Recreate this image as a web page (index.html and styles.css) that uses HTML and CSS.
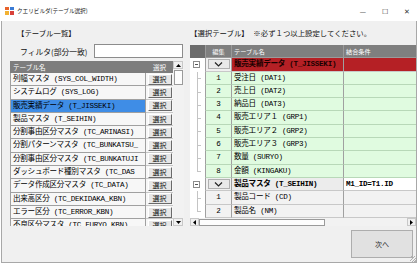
FILE: index.html
```html
<!DOCTYPE html>
<html lang="ja">
<head>
    <meta charset="UTF-8">
    <title>クエリビルダ(テーブル選択)</title>
    <link rel="stylesheet" href="styles.css">
</head>
<body>
    <div class="window">
        <div class="titlebar">
            <svg class="app-icon" width="9" height="8" viewBox="0 0 9 8">
                <rect x="0" y="0" width="4" height="3" fill="#e8632b"/>
                <rect x="5" y="0" width="4" height="3" fill="#3a7bd5"/>
                <rect x="0" y="4" width="4" height="4" fill="#f2b233"/>
                <rect x="5" y="4" width="4" height="4" fill="#d9423a"/>
            </svg>
            <span class="title">クエリビルダ(テーブル選択)</span>
            <div class="controls">
                <span class="ctl">&#x2014;</span>
                <span class="ctl">&#x2610;</span>
                <span class="ctl">&#x2715;</span>
            </div>
        </div>

        <div class="client">
            <div class="panes">
                <!-- テーブル一覧 -->
                <section class="left">
                    <div class="heading">【テーブル一覧】</div>
                    <div class="filter">
                        <label>フィルタ(部分一致)</label>
                        <input type="text" class="filter-input">
                    </div>
                    <div class="list">
                        <div class="list-body">
                            <div class="lrow head">
                                <div class="lname">テーブル名</div>
                                <div class="lsel">選択</div>
                            </div>
                            <div class="lrow"><div class="lname">列幅マスタ (SYS_COL_WIDTH)</div><div class="lsel"><span class="btn">選択</span></div></div>
                            <div class="lrow"><div class="lname">システムログ (SYS_LOG)</div><div class="lsel"><span class="btn">選択</span></div></div>
                            <div class="lrow selected"><div class="lname">販売実績データ (T_JISSEKI)</div><div class="lsel"><span class="btn">選択</span></div></div>
                            <div class="lrow"><div class="lname">製品マスタ (T_SEIHIN)</div><div class="lsel"><span class="btn">選択</span></div></div>
                            <div class="lrow"><div class="lname">分割事由区分マスタ (TC_ARINASI)</div><div class="lsel"><span class="btn">選択</span></div></div>
                            <div class="lrow"><div class="lname">分割パターンマスタ (TC_BUNKATSU_</div><div class="lsel"><span class="btn">選択</span></div></div>
                            <div class="lrow"><div class="lname">分割事由区分マスタ (TC_BUNKATUJI</div><div class="lsel"><span class="btn">選択</span></div></div>
                            <div class="lrow"><div class="lname">ダッシュボード種別マスタ (TC_DAS</div><div class="lsel"><span class="btn">選択</span></div></div>
                            <div class="lrow"><div class="lname">データ作成区分マスタ (TC_DATA)</div><div class="lsel"><span class="btn">選択</span></div></div>
                            <div class="lrow"><div class="lname">出来高区分 (TC_DEKIDAKA_KBN)</div><div class="lsel"><span class="btn">選択</span></div></div>
                            <div class="lrow"><div class="lname">エラー区分 (TC_ERROR_KBN)</div><div class="lsel"><span class="btn">選択</span></div></div>
                            <div class="lrow"><div class="lname">不良区分マスタ (TC_FURYO_KBN)</div><div class="lsel"><span class="btn">選択</span></div></div>
                        </div>
                        <div class="vscroll">
                            <span class="arrow"><svg width="5" height="3" viewBox="0 0 5 3"><path d="M0 3 L2.5 0 L5 3 Z" fill="#000"/></svg></span>
                            <span class="vthumb"></span>
                            <span class="vtrack"></span>
                            <span class="arrow"><svg width="5" height="3" viewBox="0 0 5 3"><path d="M0 0 L5 0 L2.5 3 Z" fill="#000"/></svg></span>
                        </div>
                    </div>
                </section>

                <!-- 選択テーブル -->
                <section class="right">
                    <div class="heading">【選択テーブル】 <span class="note">※必ず１つ以上設定してください。</span></div>
                    <div class="grid">
                        <div class="grow head">
                            <div class="gut"></div>
                            <div class="edit">編集</div>
                            <div class="name">テーブル名</div>
                            <div class="join">結合条件</div>
                        </div>

                        <div class="grow tbl red">
                            <div class="gut"><svg width="7" height="7" viewBox="0 0 7 7"><rect x="0.5" y="0.5" width="6" height="6" fill="#fff" stroke="#8c8c8c"/><path d="M2 3.5 H5" stroke="#555"/></svg></div>
                            <div class="edit"><span class="drop"><svg width="9" height="5" viewBox="0 0 9 5"><path d="M1 0.5 L4.5 4 L8 0.5" fill="none" stroke="#222" stroke-width="1.2"/></svg></span></div>
                            <div class="name">販売実績データ (T_JISSEKI)</div>
                            <div class="join"></div>
                        </div>
                        <div class="grow col green"><div class="gut tree"></div><div class="edit">1</div><div class="name">受注日 (DAT1)</div><div class="join"></div></div>
                        <div class="grow col green"><div class="gut tree"></div><div class="edit">2</div><div class="name">売上日 (DAT2)</div><div class="join"></div></div>
                        <div class="grow col green"><div class="gut tree"></div><div class="edit">3</div><div class="name">納品日 (DAT3)</div><div class="join"></div></div>
                        <div class="grow col green"><div class="gut tree"></div><div class="edit">4</div><div class="name">販売エリア１ (GRP1)</div><div class="join"></div></div>
                        <div class="grow col green"><div class="gut tree"></div><div class="edit">5</div><div class="name">販売エリア２ (GRP2)</div><div class="join"></div></div>
                        <div class="grow col green"><div class="gut tree"></div><div class="edit">6</div><div class="name">販売エリア３ (GRP3)</div><div class="join"></div></div>
                        <div class="grow col green"><div class="gut tree"></div><div class="edit">7</div><div class="name">数量 (SURYO)</div><div class="join"></div></div>
                        <div class="grow col green last"><div class="gut tree"></div><div class="edit">8</div><div class="name">金額 (KINGAKU)</div><div class="join"></div></div>

                        <div class="grow tbl gray">
                            <div class="gut"><svg width="7" height="7" viewBox="0 0 7 7"><rect x="0.5" y="0.5" width="6" height="6" fill="#fff" stroke="#8c8c8c"/><path d="M2 3.5 H5" stroke="#555"/></svg></div>
                            <div class="edit"><span class="drop"><svg width="9" height="5" viewBox="0 0 9 5"><path d="M1 0.5 L4.5 4 L8 0.5" fill="none" stroke="#222" stroke-width="1.2"/></svg></span></div>
                            <div class="name">製品マスタ (T_SEIHIN)</div>
                            <div class="join">M1_ID=T1.ID</div>
                        </div>
                        <div class="grow col plain"><div class="gut tree"></div><div class="edit">1</div><div class="name">製品コード (CD)</div><div class="join"></div></div>
                        <div class="grow col plain last"><div class="gut tree"></div><div class="edit">2</div><div class="name">製品名 (NM)</div><div class="join"></div></div>
                    </div>
                    <div class="hscroll">
                        <span class="arrow"><svg width="3" height="5" viewBox="0 0 3 5"><path d="M3 0 L0 2.5 L3 5 Z" fill="#000"/></svg></span>
                        <span class="hthumb"></span>
                        <span class="htrack"></span>
                        <span class="arrow"><svg width="3" height="5" viewBox="0 0 3 5"><path d="M0 0 L3 2.5 L0 5 Z" fill="#000"/></svg></span>
                    </div>
                </section>
            </div>

            <div class="footer">
                <button class="next">次へ</button>
            </div>
            <span class="grip"></span>
        </div>
    </div>
</body>
</html>
```

FILE: styles.css
```css
body {
    margin: 0;
    font-family: "Noto Sans CJK JP", "Liberation Sans", sans-serif;
    background: #f0f0f0;
}
.window {
    width: 420px;
    height: 267px;
    display: flex;
    flex-direction: column;
    background: #fff;
}

/* タイトルバー */
.titlebar {
    height: 21px;
    display: flex;
    align-items: center;
    padding-left: 5px;
    background: #fff;
}
.app-icon {
    margin-right: 3px;
}
.title {
    font-size: 5.6px;
    color: #222;
}
.controls {
    margin-left: auto;
    display: flex;
    gap: 16px;
    padding-right: 10px;
    font-size: 7px;
    color: #333;
}

/* クライアント領域 */
.client {
    flex: 1;
    position: relative;
    display: flex;
    flex-direction: column;
    background: #f0f0f0;
    margin: 0 3px 4px 1px;
    border-left: 1px solid #a8a8a8;
    border-right: 1px solid #a8a8a8;
    border-bottom: 1px solid #a8a8a8;
}
.panes {
    display: flex;
    gap: 6px;
    padding: 6px 0 0 8px;
}
.heading {
    font-size: 7.4px;
    color: #111;
    height: 12px;
    line-height: 12px;
    padding-left: 7px;
}
.note {
    margin-left: 3px;
}

/* 左：テーブル一覧 */
.left {
    width: 174px;
    display: flex;
    flex-direction: column;
}
.filter {
    display: flex;
    align-items: center;
    height: 16px;
    margin-top: 4px;
    padding-left: 10px;
    font-size: 7.8px;
    color: #111;
}
.filter label {
    width: 74px;
}
.filter-input {
    width: 89px;
    height: 14px;
    box-sizing: border-box;
    border: 1px solid #8c8c8c;
    background: #fff;
    padding: 0;
    margin: 0;
}
.list {
    display: flex;
    height: 165px;
    margin-top: 2px;
}
.list-body {
    width: 163px;
    overflow: hidden;
    background: #fff;
}
.lrow {
    display: flex;
    height: 13.3px;
    font-family: "Liberation Mono", "Noto Sans CJK JP", monospace;
    font-size: 7.6px;
    letter-spacing: -0.3px;
    line-height: 13px;
}
.lrow.head {
    height: 12px;
    line-height: 12px;
}
.lname {
    width: 136px;
    box-sizing: border-box;
    padding-left: 2px;
    white-space: nowrap;
    overflow: hidden;
    background: #f7f7f7;
    border: 1px solid #a0a0a0;
    border-top: none;
    color: #000;
}
.lsel {
    flex: 1;
    display: flex;
    align-items: center;
    justify-content: center;
    border-bottom: 1px solid #c8c8c8;
    background: #f7f7f7;
}
.lrow.head .lname,
.lrow.head .lsel {
    background: #7d7d7d;
    color: #fff;
    border-color: #7d7d7d;
    font-family: "Noto Sans CJK JP", sans-serif;
    font-size: 6.6px;
    letter-spacing: 0;
}
.lrow.selected .lname {
    background: #3f8de6;
}
.btn {
    width: 24px;
    height: 11px;
    box-sizing: border-box;
    display: flex;
    align-items: center;
    justify-content: center;
    background: #e6e6e6;
    border: 1px solid;
    border-color: #fff #6a6a6a #6a6a6a #fff;
    font-family: "Noto Sans CJK JP", sans-serif;
    font-size: 7px;
    letter-spacing: 0;
    line-height: 1;
    color: #111;
}

.vscroll {
    width: 11px;
    display: flex;
    flex-direction: column;
    background: #f2f2f2;
}
.arrow {
    display: flex;
    align-items: center;
    justify-content: center;
    width: 10px;
    height: 8px;
    background: #f0f0f0;
    border: 1px solid #c8c8c8;
    box-sizing: border-box;
}
.vthumb {
    height: 15px;
    margin: 1px 0 0 1px;
    width: 9px;
    background: #fdfdfd;
    border: 1px solid #9a9a9a;
    box-sizing: border-box;
}
.vtrack {
    flex: 1;
}

/* 右：選択テーブル */
.right {
    width: 226px;
    display: flex;
    flex-direction: column;
}
.right .heading {
    padding-left: 0;
}
.grid {
    margin-top: 6px;
    height: 173px;
    overflow: hidden;
    background: #fff;
}
.grow {
    display: flex;
    height: 13.3px;
    font-family: "Liberation Mono", "Noto Sans CJK JP", monospace;
    font-size: 7.6px;
    letter-spacing: -0.3px;
    line-height: 13px;
    color: #000;
}
.grow > div {
    box-sizing: border-box;
    white-space: nowrap;
    overflow: hidden;
}
.gut {
    width: 15px;
    flex: none;
    display: flex;
    align-items: center;
    padding-left: 3px;
    background: #fff;
}
.edit {
    width: 26px;
    flex: none;
    text-align: center;
    border-left: 1px solid #a0a0a0;
    border-bottom: 1px solid #c8c8c8;
}
.name {
    width: 112px;
    flex: none;
    padding-left: 2px;
    border-left: 1px solid #a0a0a0;
    border-bottom: 1px solid #c8c8c8;
}
.join {
    width: 80px;
    flex: none;
    padding-left: 2px;
    border-left: 1px solid #a0a0a0;
    border-bottom: 1px solid #c8c8c8;
}
.grow.head {
    background: #7f7f7f;
    color: #fff;
    font-family: "Noto Sans CJK JP", sans-serif;
    font-size: 6.2px;
    letter-spacing: 0;
}
.grow.head .gut {
    background: #6c6c6c;
}
.grow.head > div {
    border-color: #9a9a9a;
}
.grow.tbl .name,
.grow.tbl .join {
    font-weight: bold;
}
.grow.red .name,
.grow.red .join {
    background: #b52025;
    color: #1a0000;
}
.grow.gray .name {
    background: #ececec;
}
.grow.gray .join {
    background: #fff;
}
.grow.tbl .edit {
    display: flex;
    align-items: center;
    justify-content: center;
    background: #f0f0f0;
}
.drop {
    width: 22px;
    height: 10px;
    display: flex;
    align-items: center;
    justify-content: center;
    background: #e9e9e9;
    border: 1px solid #b0b0b0;
    box-sizing: border-box;
}
.grow.green .edit,
.grow.green .name,
.grow.green .join {
    background: #e0fbe0;
    border-bottom-color: #b8d8b8;
}
.grow.plain .edit,
.grow.plain .name,
.grow.plain .join {
    background: #f2f2f2;
}
.gut.tree {
    position: relative;
}
.gut.tree::before {
    content: "";
    position: absolute;
    left: 7px;
    top: 0;
    bottom: 0;
    border-left: 1px solid #c4c4c4;
}
.grow.last .gut.tree::before {
    bottom: 50%;
}
.gut.tree::after {
    content: "";
    position: absolute;
    left: 7px;
    top: 50%;
    width: 4px;
    border-top: 1px solid #c4c4c4;
}

.hscroll {
    display: flex;
    height: 8px;
    background: #f2f2f2;
}
.hscroll .arrow {
    width: 9px;
    height: 8px;
}
.hthumb {
    width: 126px;
    margin-top: 1px;
    height: 7px;
    background: #fdfdfd;
    border: 1px solid #9a9a9a;
    box-sizing: border-box;
}
.htrack {
    flex: 1;
}

/* フッター */
.footer {
    display: flex;
    justify-content: flex-end;
    padding: 4px 3px 0 0;
}
.next {
    width: 62px;
    height: 28px;
    background: #e1e1e1;
    border: 1px solid #adadad;
    font-family: "Noto Sans CJK JP", sans-serif;
    font-size: 7px;
    color: #222;
}
.grip {
    position: absolute;
    right: 0;
    bottom: 0;
    width: 6px;
    height: 6px;
    background: repeating-linear-gradient(135deg, transparent 0 1px, #b0b0b0 1px 2px);
}
```
